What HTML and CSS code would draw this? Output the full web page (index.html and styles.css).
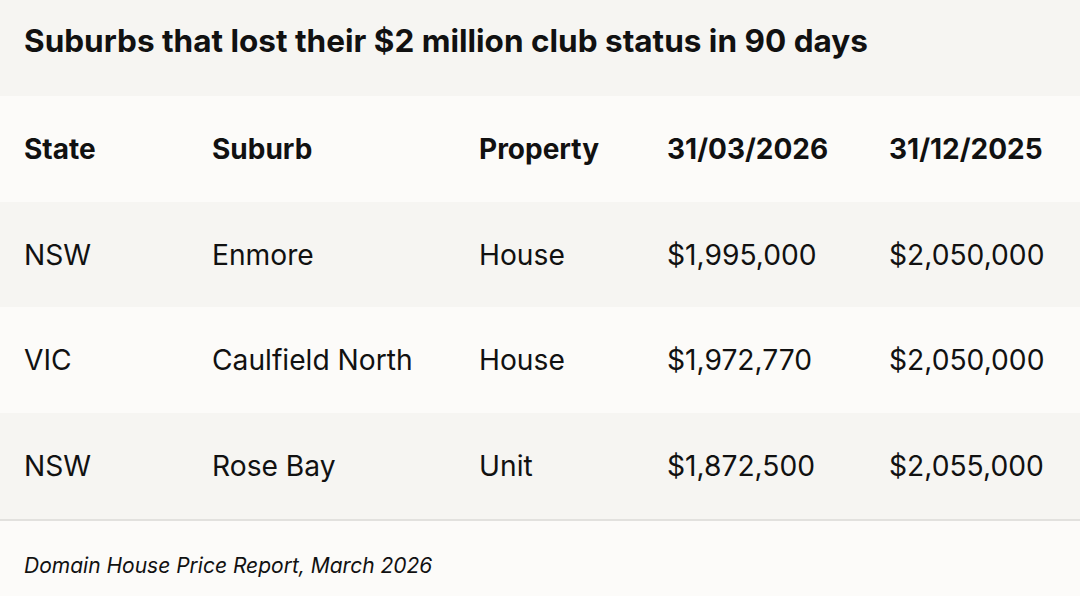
FILE: index.html
```html
<!DOCTYPE html>
<html>
<head>
<meta charset="utf-8">
<link rel="stylesheet" href="styles.css">
</head>
<body>
<div class="card">
  <div class="title-bar"><h1>Suburbs that lost their $2 million club status in 90 days</h1></div>
  <div class="table">
    <div class="row head">
      <div>State</div><div>Suburb</div><div>Property</div><div>31/03/2026</div><div>31/12/2025</div>
    </div>
    <div class="row alt">
      <div>NSW</div><div>Enmore</div><div>House</div><div>$1,995,000</div><div>$2,050,000</div>
    </div>
    <div class="row">
      <div>VIC</div><div>Caulfield North</div><div>House</div><div>$1,972,770</div><div>$2,050,000</div>
    </div>
    <div class="row alt">
      <div>NSW</div><div>Rose Bay</div><div>Unit</div><div>$1,872,500</div><div>$2,055,000</div>
    </div>
  </div>
  <div class="source">Domain House Price Report, March 2026</div>
</div>
</body>
</html>
```

FILE: styles.css
```css
html, body {
  margin: 0;
  padding: 0;
  background: #fcfbf9;
}
.card {
  width: 1080px;
  height: 596px;
  font-family: Inter, "Liberation Sans", sans-serif;
  color: #111;
  display: flex;
  flex-direction: column;
}
.title-bar {
  background: #f6f5f2;
  height: 96px;
  padding: 0 24px;
  display: flex;
  align-items: center;
  box-sizing: border-box;
}
h1 {
  margin: 0;
  font-size: 31.5px;
  font-weight: 700;
  letter-spacing: 0;
  padding-bottom: 15px;
  white-space: nowrap;
}
.table {
  border-bottom: 2px solid #e2e1de;
}
.row {
  display: grid;
  grid-template-columns: 188px 267px 188px 222px 1fr;
  height: 105.7px;
  align-items: center;
  padding-left: 24px;
  font-size: 28.2px;
  white-space: nowrap;
}
.row.head {
  font-weight: 700;
  font-size: 28px;
}
.row.alt {
  background: #f6f5f2;
}
.source {
  padding: 32px 24px 0;
  font-size: 21px;
  font-style: italic;
}
```
